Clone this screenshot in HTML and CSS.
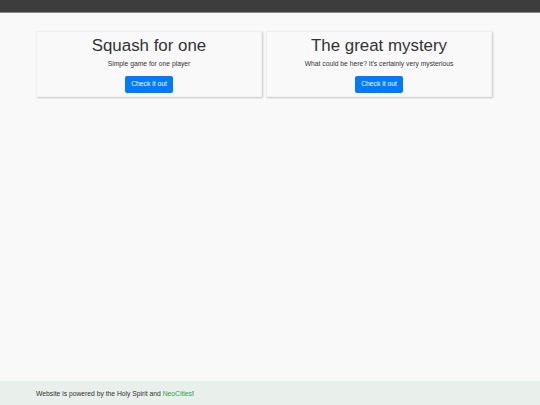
FILE: index.html
```html
<!DOCTYPE html>
<html lang="en">
<head>
<meta charset="utf-8">
<title>Projects</title>
<link rel="stylesheet" href="styles.css">
</head>
<body>
<div class="page">
  <header class="topbar"></header>
  <main class="container">
    <div class="cards">
      <section class="card">
        <h1 class="card-title">Squash for one</h1>
        <p class="card-text">Simple game for one player</p>
        <a class="btn" href="#">Check it out</a>
      </section>
      <section class="card">
        <h1 class="card-title">The great mystery</h1>
        <p class="card-text">What could be here? It's certainly very mysterious</p>
        <a class="btn" href="#">Check it out</a>
      </section>
    </div>
  </main>
  <footer class="footer">
    <div class="footer-inner">Website is powered by the Holy Spirit and <a class="footer-link" href="#">NeoCities</a>!</div>
  </footer>
</div>
</body>
</html>
```

FILE: styles.css
```css
html, body {
  margin: 0;
  padding: 0;
  height: 100%;
}
body {
  background: #f9f9f9;
  font-family: "Liberation Sans", Arial, sans-serif;
  color: #333;
}
.page {
  min-height: 100%;
  display: flex;
  flex-direction: column;
}
.topbar {
  height: 12px;
  background: #3d3d3d;
  border-bottom: 1px solid #8a8a8a;
}
.container {
  flex: 1;
  padding: 18px 0 0 36px;
}
.cards {
  display: flex;
  gap: 4px;
}
.card {
  width: 226px;
  box-sizing: border-box;
  background: #f9f9f9;
  border: 1px solid #f0f0f0;
  box-shadow: 1px 1px 2px rgba(0, 0, 0, 0.2);
  padding: 3.5px 6px 2.5px;
  text-align: center;
  display: flex;
  flex-direction: column;
  align-items: center;
}
.card-title {
  margin: 0 0 3.4px;
  font-size: 16.9px;
  line-height: 20.25px;
  font-weight: 400;
  color: #333;
}
.card-text {
  margin: 0 0 6.75px;
  font-size: 6.75px;
  line-height: 10.1px;
  color: #333;
}
.btn {
  display: inline-block;
  background: #007bff;
  color: #fff;
  text-decoration: none;
  font-size: 6.75px;
  line-height: 10.1px;
  padding: 2.5px 5.1px;
  border: 0.42px solid #007bff;
  border-radius: 1.7px;
}
.footer {
  height: 24px;
  background: #e9efea;
  display: flex;
  align-items: center;
}
.footer-inner {
  padding-left: 36px;
  font-size: 6.75px;
  color: #333;
}
.footer-link {
  color: #28a745;
  text-decoration: none;
}
```
